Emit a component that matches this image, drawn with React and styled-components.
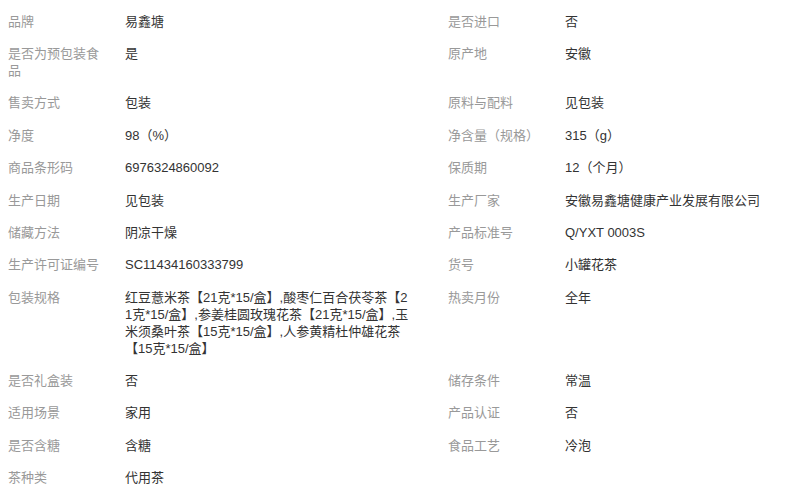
import styled, { createGlobalStyle } from "styled-components";

const GlobalStyle = createGlobalStyle`
  body {
    margin: 0;
    background: #fff;
    font-family: "Liberation Sans", "Noto Sans CJK SC", sans-serif;
  }
`;

const Table = styled.div`
  padding: 5px 0 0 8px;
  width: 785px;
  box-sizing: border-box;
`;

const Row = styled.div`
  display: grid;
  grid-template-columns: 117px 323px 117px 1fr;
  align-items: start;
`;

const Label = styled.div`
  font-size: 13px;
  line-height: 17px;
  color: #999;
  padding: 7.7px 15px 7.7px 0;
`;

const Value = styled.div`
  font-size: 13px;
  line-height: 17px;
  color: #333;
  padding: 7.7px 0;
  max-width: ${(p) => (p.$wide ? "none" : "287px")};
  word-break: break-all;
`;

const rows = [
  [["品牌", "易鑫塘"], ["是否进口", "否"]],
  [["是否为预包装食品", "是"], ["原产地", "安徽"]],
  [["售卖方式", "包装"], ["原料与配料", "见包装"]],
  [["净度", "98（%）"], ["净含量（规格）", "315（g）"]],
  [["商品条形码", "6976324860092"], ["保质期", "12（个月）"]],
  [["生产日期", "见包装"], ["生产厂家", "安徽易鑫塘健康产业发展有限公司"]],
  [["储藏方法", "阴凉干燥"], ["产品标准号", "Q/YXT 0003S"]],
  [["生产许可证编号", "SC11434160333799"], ["货号", "小罐花茶"]],
  [
    [
      "包装规格",
      "红豆薏米茶【21克*15/盒】,酸枣仁百合茯苓茶【21克*15/盒】,参姜桂圆玫瑰花茶【21克*15/盒】,玉米须桑叶茶【15克*15/盒】,人参黄精杜仲雄花茶【15克*15/盒】",
    ],
    ["热卖月份", "全年"],
  ],
  [["是否礼盒装", "否"], ["储存条件", "常温"]],
  [["适用场景", "家用"], ["产品认证", "否"]],
  [["是否含糖", "含糖"], ["食品工艺", "冷泡"]],
  [["茶种类", "代用茶"], null],
];

const App = () => {
  return (
    <>
      <GlobalStyle />
      <Table>
        {rows.map(([left, right], i) => (
          <Row key={i}>
            <Label>{left[0]}</Label>
            <Value>{left[1]}</Value>
            {right && (
              <>
                <Label>{right[0]}</Label>
                <Value $wide>{right[1]}</Value>
              </>
            )}
          </Row>
        ))}
      </Table>
    </>
  );
};

export default App;
